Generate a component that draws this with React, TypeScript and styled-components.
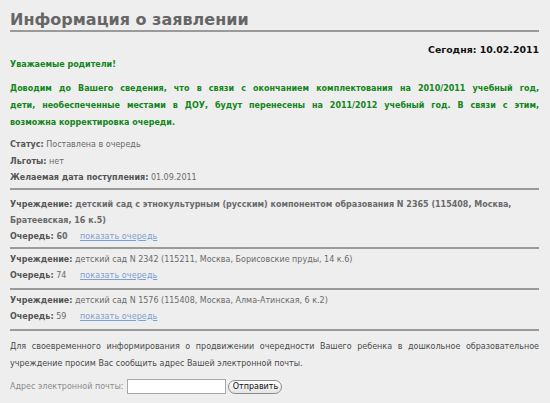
import React from "react";
import styled, { createGlobalStyle } from "styled-components";

const Global = createGlobalStyle`
  html, body { margin: 0; padding: 0; background: #eeeeee; }
  body { font-family: Verdana, "DejaVu Sans", sans-serif; font-size: 8px; color: #555; }
`;

const Page = styled.div`
  width: 529px;
  padding: 10px 11px 0 10px;
`;

const Title = styled.h1`
  margin: 0;
  font-size: 16px;
  font-weight: bold;
  color: #666;
  line-height: 20px;
  border-bottom: 2px solid #9a9a9a;
`;

const Today = styled.div`
  text-align: right;
  font-size: 9.4px;
  font-weight: bold;
  color: #111;
  margin-top: 10px;
  line-height: 16px;
`;

const Greeting = styled.div`
  color: #13851a;
  font-weight: bold;
  line-height: 14px;
`;

const Notice = styled.div`
  color: #13851a;
  font-weight: bold;
  line-height: 17px;
  margin: 8px 0 0;
`;

/* each notice line is set on its own; full lines are spread edge to edge */
const NoticeLine = styled.span<{ $fill?: boolean }>`
  display: block;
  white-space: nowrap;
  text-align: ${(p) => (p.$fill ? "justify" : "left")};
  text-align-last: ${(p) => (p.$fill ? "justify" : "left")};
`;

const Facts = styled.div`
  margin-top: 6px;
  padding-bottom: 1px;
  border-bottom: 2px solid #9a9a9a;
`;

const Line = styled.div<{ $strong?: boolean; $tall?: boolean }>`
  line-height: ${(p) => (p.$tall ? "16.5px" : "16px")};
  color: #6a6a6a;
  font-weight: ${(p) => (p.$strong ? "bold" : "normal")};
  b { color: #555; }
`;

const Institution = styled.div<{ $lead?: boolean }>`
  padding: ${(p) => (p.$lead ? "7px 0 2px" : "3px 0 4px")};
  border-bottom: 2px solid #9a9a9a;
`;

const QueueRow = styled.div<{ $strong?: boolean }>`
  display: flex;
  line-height: 16px;
  color: #6a6a6a;
  font-weight: ${(p) => (p.$strong ? "bold" : "normal")};
  b { color: #555; }
`;

const QueueValue = styled.span`
  width: 70px;
  flex: none;
`;

const Link = styled.a`
  color: #7b9fd1;
  text-decoration: underline;
  font-weight: normal;
  letter-spacing: 0.1px;
  cursor: pointer;
`;

const Closing = styled.p`
  margin: 7px 0 0;
  text-align: justify;
  line-height: 17px;
  color: #4a4a4a;
`;

const EmailRow = styled.div`
  display: flex;
  align-items: center;
  gap: 4px;
  margin-top: 6px;
  height: 18px;
  color: #8a8a8a;
`;

const EmailInput = styled.input`
  box-sizing: border-box;
  width: 99px;
  height: 15px;
  border: 1px solid #a8a8a8;
  background: #fff;
  padding: 0 2px;
  margin: 0;
`;

const SendButton = styled.button`
  box-sizing: border-box;
  font-family: "DejaVu Sans", sans-serif;
  font-size: 8px;
  color: #111;
  width: 54px;
  height: 14px;
  padding: 0;
  border: 1px solid #8c8c8c;
  border-radius: 7px;
  background: linear-gradient(#ffffff, #e4e4e4);
  margin-left: -2px;
`;

const noticeLines = [
  "Доводим до Вашего сведения, что в связи с окончанием комплектования на 2010/2011 учебный год,",
  "дети, необеспеченные местами в ДОУ, будут перенесены на 2011/2012 учебный год. В связи с этим,",
  "возможна корректировка очереди.",
];

const institutions = [
  {
    strong: true,
    name: "детский сад с этнокультурным (русским) компонентом образования N 2365 (115408, Москва, Братеевская, 16 к.5)",
    queue: 60,
  },
  {
    strong: false,
    name: "детский сад N 2342 (115211, Москва, Борисовские пруды, 14 к.6)",
    queue: 74,
  },
  {
    strong: false,
    name: "детский сад N 1576 (115408, Москва, Алма-Атинская, 6 к.2)",
    queue: 59,
  },
];

export default function App() {
  return (
    <>
      <Global />
      <Page>
        <Title>Информация о заявлении</Title>
        <Today>Сегодня: 10.02.2011</Today>
        <Greeting>Уважаемые родители!</Greeting>
        <Notice>
          {noticeLines.map((text, i) => (
            <NoticeLine key={i} $fill={i < noticeLines.length - 1}>{text}</NoticeLine>
          ))}
        </Notice>
        <Facts>
          <Line $tall><b>Статус:</b> Поставлена в очередь</Line>
          <Line $tall><b>Льготы:</b> нет</Line>
          <Line $tall><b>Желаемая дата поступления:</b> 01.09.2011</Line>
        </Facts>
        {institutions.map((it, i) => (
          <Institution key={it.queue} $lead={i === 0}>
            <Line $strong={it.strong}><b>Учреждение:</b> {it.name}</Line>
            <QueueRow $strong={it.strong}>
              <QueueValue><b>Очередь:</b> {it.queue}</QueueValue>
              <Link>показать очередь</Link>
            </QueueRow>
          </Institution>
        ))}
        <Closing>
          Для своевременного информирования о продвижении очередности Вашего ребенка в дошкольное образовательное
          учреждение просим Вас сообщить адрес Вашей электронной почты.
        </Closing>
        <EmailRow>
          <span>Адрес электронной почты:</span>
          <EmailInput type="text" />
          <SendButton>Отправить</SendButton>
        </EmailRow>
      </Page>
    </>
  );
}
